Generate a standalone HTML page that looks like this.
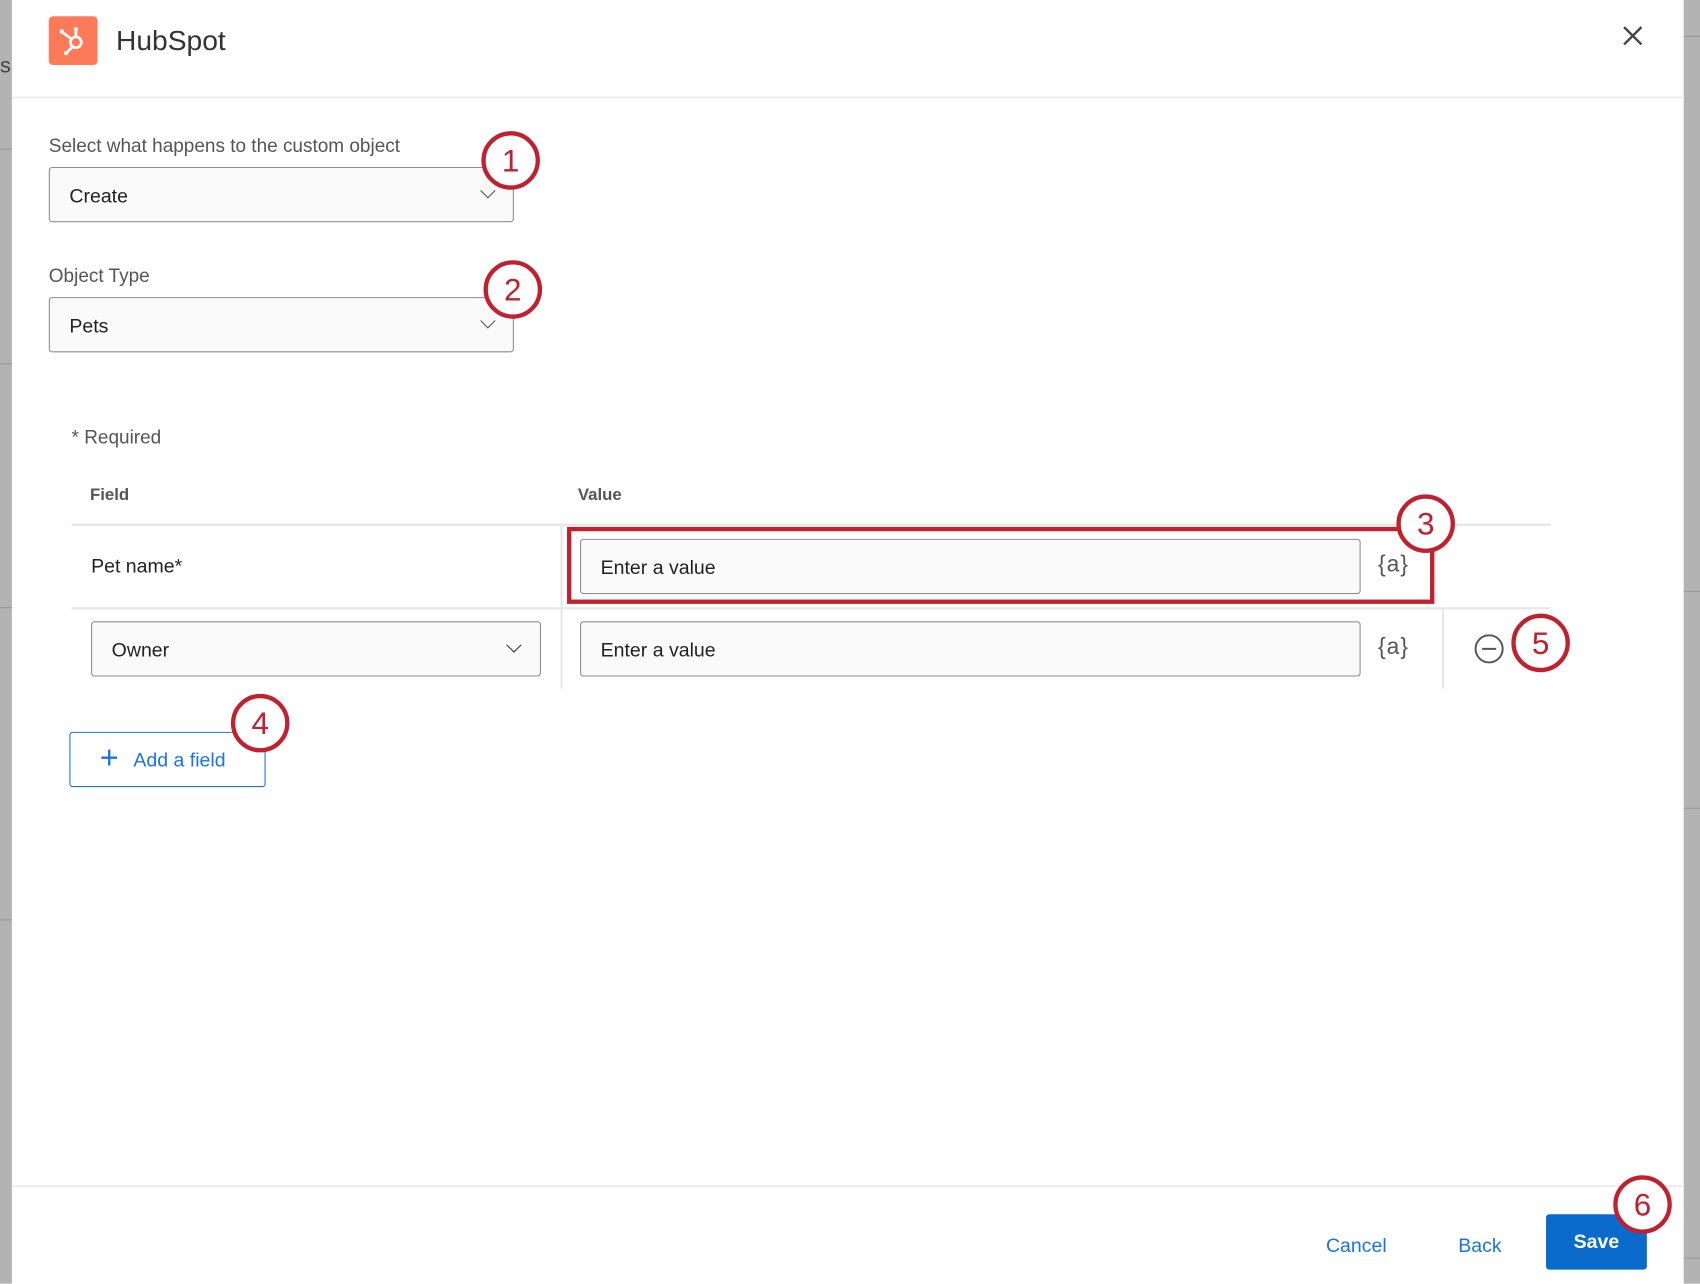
<!DOCTYPE html>
<html><head><meta charset="utf-8"><style>
html,body{margin:0;padding:0;width:1700px;height:1284px;overflow:hidden;background:#fff}
#s{position:absolute;left:0;top:0;width:1568px;height:1184px;transform:scale(1.08418);transform-origin:0 0;font-family:"Liberation Sans",sans-serif;color:#333}
.a{position:absolute}
.sel{position:absolute;border:1.5px solid #8f8f8f;border-radius:3px;background:#fafafa;box-sizing:border-box;font-size:18px;color:#222}
.sel span{position:absolute;left:18px;top:50%;transform:translateY(-45%)}
.chev{position:absolute;width:9px;height:9px;border-right:1.5px solid #555;border-bottom:1.5px solid #555;transform:rotate(45deg)}
.c{position:absolute;width:46px;height:46px;border:4px solid #c1202f;border-radius:50%;background:#fff;color:#c1202f;font-size:29px;text-align:center;line-height:48px;box-sizing:content-box}
.lab{position:absolute;font-size:17.5px;color:#555}
.var{position:absolute;font-size:21px;color:#555;letter-spacing:1px}
.line{position:absolute;background:#e6e6e6}
</style></head><body><div id="s">
<div class="a" style="left:0;top:0;width:11px;height:1184px;background:#b3b3b3"></div>
<div class="a" style="left:0;top:50px;font-size:20px;color:#444">s</div>
<div class="a" style="left:1553px;top:0;width:15px;height:1184px;background:#b3b3b3"></div>
<div class="line" style="left:1553px;top:33px;width:15px;height:1px;background:#999"></div>
<div class="line" style="left:1553px;top:545px;width:15px;height:1px;background:#999"></div>
<div class="line" style="left:1553px;top:745px;width:15px;height:1px;background:#999"></div>
<div class="line" style="left:1553px;top:1160px;width:15px;height:1px;background:#999"></div>
<div class="line" style="left:0;top:137px;width:11px;height:1px;background:#999"></div>
<div class="line" style="left:0;top:335px;width:11px;height:1px;background:#999"></div>
<div class="line" style="left:0;top:560px;width:11px;height:1px;background:#999"></div>
<div class="line" style="left:0;top:848px;width:11px;height:1px;background:#999"></div>

<div class="a" style="left:45px;top:15px;width:45px;height:45px;background:#ff7a59;border-radius:4px">
<svg width="45" height="45" viewBox="0 0 45 45"><g stroke="#fff" stroke-width="2.5" fill="none"><circle cx="25" cy="24" r="5"/><path d="M25 19V13M21 21L13 15M22 28L17 33"/></g><circle cx="25" cy="12" r="2" fill="#fff"/><circle cx="12" cy="14" r="2" fill="#fff"/><circle cx="16" cy="34" r="2" fill="#fff"/></svg></div>
<div class="a" style="left:107px;top:22px;font-size:26px;color:#333">HubSpot</div>
<svg class="a" style="left:1495px;top:22px" width="22" height="22"><path d="M3 3L19 19M19 3L3 19" stroke="#444" stroke-width="2.2"/></svg>
<div class="line" style="left:11px;top:89px;width:1542px;height:2px;background:#eee"></div>

<div class="lab" style="left:45px;top:124px">Select what happens to the custom object</div>
<div class="sel" style="left:45px;top:154px;width:429px;height:51px"><span>Create</span><div class="chev" style="left:399px;top:16px"></div></div>
<div class="c" style="left:444px;top:121px">1</div>
<div class="lab" style="left:45px;top:244px">Object Type</div>
<div class="sel" style="left:45px;top:274px;width:429px;height:51px"><span>Pets</span><div class="chev" style="left:399px;top:16px"></div></div>
<div class="c" style="left:446px;top:240px">2</div>

<div class="lab" style="left:66px;top:393px">* Required</div>
<div class="a" style="left:83px;top:448px;font-size:15.5px;font-weight:bold;color:#555">Field</div>
<div class="a" style="left:533px;top:448px;font-size:15.5px;font-weight:bold;color:#555">Value</div>
<div class="line" style="left:66px;top:483px;width:1364px;height:2px"></div>
<div class="line" style="left:66px;top:560px;width:1364px;height:2px"></div>
<div class="line" style="left:517px;top:485px;width:2px;height:150px"></div>
<div class="line" style="left:1330px;top:562px;width:2px;height:73px"></div>

<div class="a" style="left:84px;top:512px;font-size:18px;color:#222">Pet name*</div>
<div class="sel" style="left:535px;top:497px;width:720px;height:51px"><span>Enter a value</span></div>
<div class="var" style="left:1271px;top:509px">{a}</div>
<div class="a" style="left:523px;top:486px;width:800px;height:71px;border:4px solid #c1202f;box-sizing:border-box"></div>
<div class="c" style="left:1288px;top:456px">3</div>

<div class="sel" style="left:84px;top:573px;width:415px;height:51px"><span>Owner</span><div class="chev" style="left:384px;top:16px;border-color:#333"></div></div>
<div class="sel" style="left:535px;top:573px;width:720px;height:51px"><span>Enter a value</span></div>
<div class="var" style="left:1271px;top:585px">{a}</div>
<svg class="a" style="left:1359px;top:584px" width="29" height="29"><circle cx="14.5" cy="14.5" r="12.5" fill="none" stroke="#555" stroke-width="1.8"/><path d="M8 14.5H21" stroke="#555" stroke-width="1.8"/></svg>
<div class="c" style="left:1394px;top:566px">5</div>

<div class="a" style="left:64px;top:675px;width:181px;height:51px;border:1.5px solid #1a73e8;border-radius:3px;box-sizing:border-box;color:#1a73e8;font-size:18px;line-height:50px"><span style="position:absolute;left:27px;top:-1px;font-size:30px">+</span><span style="position:absolute;left:58px">Add a field</span></div>
<div class="c" style="left:213px;top:640px">4</div>

<div class="line" style="left:11px;top:1093px;width:1542px;height:2px;background:#eee"></div>
<div class="a" style="left:1223px;top:1139px;font-size:18px;color:#1a73e8">Cancel</div>
<div class="a" style="left:1345px;top:1139px;font-size:18px;color:#1a73e8">Back</div>
<div class="a" style="left:1426px;top:1120px;width:93px;height:51px;background:#0b6bcc;border-radius:3px;color:#fff;font-size:18px;font-weight:bold;text-align:center;line-height:51px">Save</div>
<div class="c" style="left:1488px;top:1084px">6</div>
</div></body></html>
